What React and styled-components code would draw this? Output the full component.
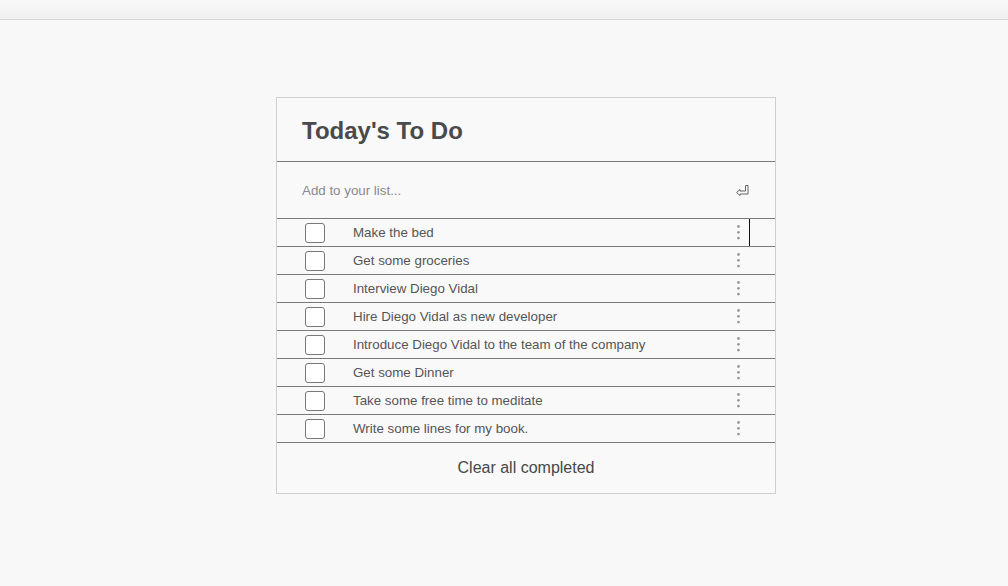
import React from 'react';
import styled, { createGlobalStyle } from 'styled-components';

const GlobalStyle = createGlobalStyle`
  html, body {
    margin: 0;
    padding: 0;
    background: #f8f8f8;
    font-family: "Liberation Sans", Arial, sans-serif;
  }
`;

const TopBar = styled.div`
  height: 19px;
  background: linear-gradient(#f7f8f7, #eff0ef);
  border-bottom: 1px solid #d6d6d6;
`;

const Main = styled.main`
  display: flex;
  justify-content: center;
  padding: 77px 0 0 44px;
`;

const Card = styled.section`
  width: 498px;
  background: #f9f9f9;
  border: 1px solid #cfcfcf;
`;

const Header = styled.header`
  height: 63px;
  display: flex;
  align-items: center;
  padding: 2px 25px 0;
  box-sizing: border-box;
  border-bottom: 1px solid #7a7a7a;
  box-sizing: content-box;
  height: 61px;
`;

const Title = styled.h1`
  margin: 0;
  font-size: 24px;
  font-weight: 700;
  color: #4a4a4a;
`;

const InputRow = styled.div`
  height: 56px;
  display: flex;
  align-items: center;
  padding: 0 26px 0 25px;
  border-bottom: 1px solid #7a7a7a;
`;

const AddInput = styled.input`
  flex: 1;
  border: none;
  outline: none;
  background: transparent;
  font-family: "Liberation Sans", Arial, sans-serif;
  font-size: 13.33px;
  color: #555;
  padding: 0;

  &::placeholder {
    color: #8a8a8a;
  }
`;

const EnterIcon = styled.svg`
  width: 13px;
  height: 11px;
  margin-top: 1px;
`;

const List = styled.ul`
  list-style: none;
  margin: 0;
  padding: 0;
`;

const Row = styled.li`
  height: 27px;
  display: grid;
  grid-template-columns: 20px 1fr 24px;
  align-items: center;
  column-gap: 28px;
  padding: 0 25px 0 28px;
  border-bottom: 1px solid #7a7a7a;
`;

const Check = styled.span`
  width: 18px;
  height: 18px;
  border: 1px solid #777;
  border-radius: 3px;
  background: #fff;
  box-sizing: content-box;
`;

const Label = styled.span`
  font-size: 13.33px;
  color: #555;
  white-space: nowrap;
`;

const MenuCell = styled.span`
  height: 27px;
  display: flex;
  align-items: center;
  padding-left: 10px;
  box-sizing: border-box;
  border-right: 1px solid ${(props) => (props.active ? '#111' : 'transparent')};
`;

const Footer = styled.footer`
  height: 50px;
  display: flex;
  align-items: center;
  justify-content: center;
`;

const ClearButton = styled.button`
  border: none;
  background: none;
  padding: 0;
  font-family: "Liberation Sans", Arial, sans-serif;
  font-size: 16px;
  color: #474747;
  cursor: pointer;
`;

const Dots = () => (
  <svg width="5" height="17" viewBox="0 0 5 17">
    <circle cx="2.5" cy="2.5" r="1.4" fill="#999" />
    <circle cx="2.5" cy="8.3" r="1.4" fill="#999" />
    <circle cx="2.5" cy="14.1" r="1.4" fill="#999" />
  </svg>
);

const todos = [
  'Make the bed',
  'Get some groceries',
  'Interview Diego Vidal',
  'Hire Diego Vidal as new developer',
  'Introduce Diego Vidal to the team of the company',
  'Get some Dinner',
  'Take some free time to meditate',
  'Write some lines for my book.',
];

const App = () => (
  <>
    <GlobalStyle />
    <TopBar />
    <Main>
      <Card>
        <Header>
          <Title>Today's To Do</Title>
        </Header>
        <InputRow>
          <AddInput placeholder="Add to your list..." />
          <EnterIcon viewBox="0 0 13 11">
            <path
              d="M9.5 0.5 H12 V9 H4 V10.5 L0.6 7.5 L4 4.5 V6 H9.5 Z"
              fill="none"
              stroke="#666"
              strokeWidth="1"
              strokeLinejoin="miter"
            />
          </EnterIcon>
        </InputRow>
        <List>
          {todos.map((todo, i) => (
            <Row key={todo}>
              <Check />
              <Label>{todo}</Label>
              <MenuCell active={i === 0}>
                <Dots />
              </MenuCell>
            </Row>
          ))}
        </List>
        <Footer>
          <ClearButton>Clear all completed</ClearButton>
        </Footer>
      </Card>
    </Main>
  </>
);

export default App;
